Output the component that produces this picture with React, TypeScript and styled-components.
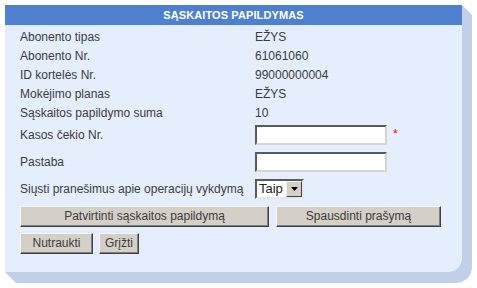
import React from "react";
import styled, { createGlobalStyle } from "styled-components";

const Global = createGlobalStyle`
  html, body { margin: 0; padding: 0; background: #ffffff; }
  body { font-family: "Liberation Sans", Arial, sans-serif; }
`;

const Page = styled.div`
  padding: 5px 15px 16px 5px;
  width: 477px;
  box-sizing: border-box;
`;

const Panel = styled.div`
  position: relative;
  width: 457px;
  height: 267px;
  &::before {
    content: "";
    position: absolute;
    left: 0;
    top: 0;
    width: calc(100% + 10px);
    height: calc(100% + 11px);
    background: #c1cfe8;
    border-bottom-right-radius: 16px;
    clip-path: polygon(calc(100% - 10px) 0, 100% 10px, 100% 100%, 11px 100%, 0 calc(100% - 11px));
  }
`;

const Card = styled.div`
  position: relative;
  height: 100%;
  background: #e5eefd;
  border-bottom-right-radius: 14px;
  display: flex;
  flex-direction: column;
`;

const Header = styled.div`
  height: 20px;
  background: #4f80cf;
  color: #ffffff;
  font-weight: bold;
  font-size: 11px;
  display: flex;
  align-items: center;
  justify-content: center;
  letter-spacing: 0.1px;
`;

const Body = styled.div`
  padding: 2px 15px 0 15px;
  display: flex;
  flex-direction: column;
  color: #3c3c3c;
  font-size: 12px;
`;

const InfoGrid = styled.div`
  display: grid;
  grid-template-columns: 235px 1fr;
  grid-auto-rows: 19px;
  align-items: center;
`;

const FieldGrid = styled.div`
  display: grid;
  grid-template-columns: 235px 1fr;
  grid-auto-rows: 20px;
  row-gap: 7px;
  align-items: center;
  margin-top: 3px;
`;

const Label = styled.span`
  white-space: nowrap;
`;

const Value = styled.span``;

const FieldCell = styled.div`
  display: flex;
  align-items: center;
  gap: 6px;
`;

const TextInput = styled.input`
  width: 132px;
  height: 20px;
  box-sizing: border-box;
  border: 2px solid;
  border-color: #5a5a5a #d8d5cd #d8d5cd #5a5a5a;
  background: #ffffff;
  padding: 0 2px;
  margin: 0;
  font: inherit;
  outline: none;
`;

const Required = styled.span`
  color: #ff0000;
  font-size: 12px;
  line-height: 1;
  margin-top: -2px;
`;

const SelectBox = styled.div`
  width: 49px;
  height: 20px;
  box-sizing: border-box;
  border: 2px solid;
  border-color: #5a5a5a #e8e8e8 #e8e8e8 #5a5a5a;
  background: #ffffff;
  display: flex;
  align-items: stretch;
`;

const SelectText = styled.span`
  flex: 1;
  font-size: 13px;
  color: #222;
  padding-left: 2px;
  line-height: 16px;
`;

const ArrowBtn = styled.span`
  width: 16px;
  box-sizing: border-box;
  background: #d4d0c8;
  border: 1px solid;
  border-color: #f4f3ef #404040 #404040 #f4f3ef;
  display: flex;
  align-items: center;
  justify-content: center;
`;

const ButtonRow = styled.div<{ $top: number }>`
  display: flex;
  gap: ${(p) => (p.$top === 7 ? 7 : 6)}px;
  margin-top: ${(p) => p.$top}px;
`;

const Button = styled.button<{ $w: number }>`
  width: ${(p) => p.$w}px;
  height: 21px;
  box-sizing: border-box;
  background: #d4d0c8;
  border: 1px solid;
  border-color: #f6f5f2 #404040 #404040 #f6f5f2;
  box-shadow: inset -1px -1px 0 #808080;
  color: #3c3c3c;
  font-family: "Liberation Sans", Arial, sans-serif;
  font-size: 12px;
  padding: 0 0 1px 0;
  margin: 0;
  cursor: pointer;
`;

export default function App() {
  return (
    <>
      <Global />
      <Page>
        <Panel>
          <Card>
            <Header>SĄSKAITOS PAPILDYMAS</Header>
            <Body>
              <InfoGrid>
                <Label>Abonento tipas</Label>
                <Value>EŽYS</Value>
                <Label>Abonento Nr.</Label>
                <Value>61061060</Value>
                <Label>ID kortelės Nr.</Label>
                <Value>99000000004</Value>
                <Label>Mokėjimo planas</Label>
                <Value>EŽYS</Value>
                <Label>Sąskaitos papildymo suma</Label>
                <Value>10</Value>
              </InfoGrid>
              <FieldGrid>
                <Label>Kasos čekio Nr.</Label>
                <FieldCell>
                  <TextInput type="text" />
                  <Required>*</Required>
                </FieldCell>
                <Label>Pastaba</Label>
                <FieldCell>
                  <TextInput type="text" />
                </FieldCell>
                <Label>Siųsti pranešimus apie operacijų vykdymą</Label>
                <FieldCell>
                  <SelectBox>
                    <SelectText>Taip</SelectText>
                    <ArrowBtn>
                      <svg width="7" height="4" viewBox="0 0 7 4">
                        <path d="M0 0h7L3.5 4z" fill="#000" />
                      </svg>
                    </ArrowBtn>
                  </SelectBox>
                </FieldCell>
              </FieldGrid>
              <ButtonRow $top={7}>
                <Button $w={249}>Patvirtinti sąskaitos papildymą</Button>
                <Button $w={165}>Spausdinti prašymą</Button>
              </ButtonRow>
              <ButtonRow $top={6}>
                <Button $w={73}>Nutraukti</Button>
                <Button $w={40}>Grįžti</Button>
              </ButtonRow>
            </Body>
          </Card>
        </Panel>
      </Page>
    </>
  );
}
